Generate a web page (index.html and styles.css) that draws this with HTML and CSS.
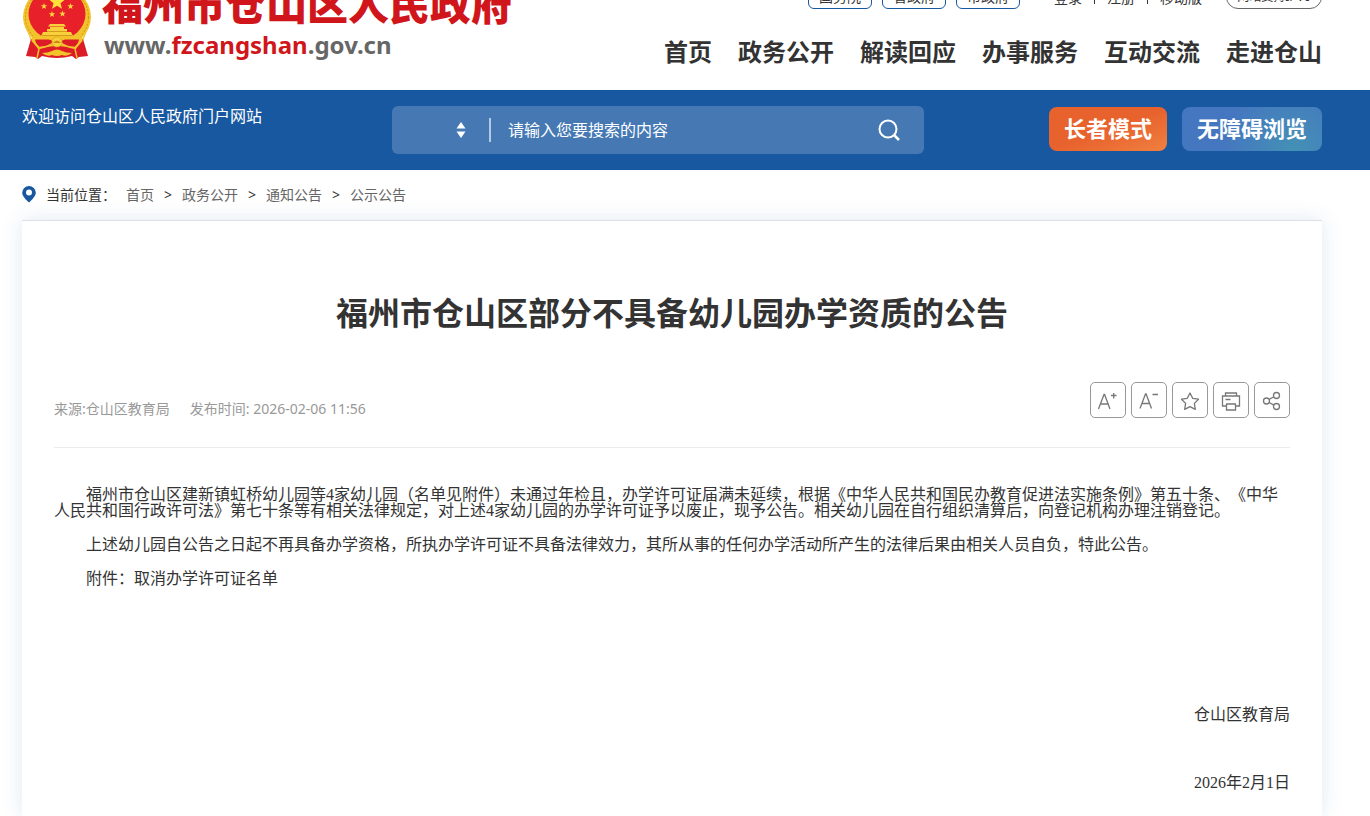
FILE: index.html
```html
<!DOCTYPE html>
<html lang="zh-CN">
<head>
    <meta charset="UTF-8">
    <title>福州市仓山区部分不具备幼儿园办学资质的公告</title>
    <link rel="stylesheet" href="styles.css">
</head>
<body>
    <header class="header">
        <div class="logo">
            <svg class="emblem" viewBox="0 0 70 74" aria-hidden="true">
                <ellipse cx="35" cy="31" rx="34" ry="31" fill="#f3c32c"/>
                <ellipse cx="35" cy="31" rx="31.500" ry="29" fill="none" stroke="#c9961c" stroke-dasharray="2 1.500"/>
                <path d="M2 36L10 54l4 6h42l4-6 8-18-8 22H10z" fill="#f3c32c"/>
                <ellipse cx="35" cy="28" rx="28.500" ry="26" fill="#e8202a"/>
                <path d="M35 8l2.200 5.300 5.700.3-4.400 3.700 1.500 5.500-5-3.100-5 3.100 1.500-5.500-4.400-3.700 5.700-.3z" fill="#ffe13a"/>
                <g fill="#ffd83a">
                    <path id="star" d="M22 17l.8 2.200h2.400l-1.900 1.500.7 2.300-2-1.300-2 1.300.7-2.300-1.900-1.500h2.400z"/>
                    <use href="#star" x="8" y="8"/>
                    <use href="#star" x="18.500" y="7.500"/>
                    <use href="#star" x="26.500" y="0"/>
                </g>
                <path d="M28 38h14l2 2.500H26zM28 41h14v2H28zM25 43h20v3H25zM21 46h28l2 4H19z" fill="#f8d03c"/>
                <path d="M12 50h46l3 3-5 12H14L9 53z" fill="#f3c32c"/>
                <path d="M25 45.500h20M20 49.500h30" stroke="#d39a1c" fill="none"/>
                <!-- ribbon and gear -->
                <path d="M13 53.500h14l4 1.500-3 5-13 1zM57 53.500H43L39 55l3 5 13 1z" fill="#dc1c26"/>
                <path d="M9 53l7 10q19-6 38 0l7-10 5 17-9 1-3 2-4-3q-15 4-30 0l-4 3-3-2-9-1z" fill="#dc1c26"/>
                <path d="M10 54l7 8q8-1 13-4l5 2 5-2q5 3 13 4l7-8" fill="none" stroke="#f3c32c" stroke-width="2"/>
                <circle cx="35" cy="56" r="5" fill="#f8d03c" stroke="#d39a1c" stroke-dasharray="1.500 1"/>
                <path d="M31 57q4-5 8 0z" fill="#c98a12"/>
                <path d="M20 67q6 0 10-2 5-3 10 0 4 2 10 2-5 4-10 2-5 2-10 0-5 2-10-2z" fill="#f3c32c"/>
                <path d="M17 63l-2 9M53 63l2 9" stroke="#f3c32c" stroke-width="1.500" fill="none"/>
            </svg>
            <div>
                <div class="site-name">福州市仓山区人民政府</div>
                <div class="site-url">www.<span>fzcangshan</span>.gov.cn</div>
            </div>
        </div>
        <div class="header-right">
            <div class="top-links">
                <a class="gov" href="#">国务院</a>
                <a class="gov" href="#">省政府</a>
                <a class="gov" href="#">市政府</a>
                <div class="user-links">
                    <a href="#">登录</a><i></i><a href="#">注册</a><i></i><a href="#">移动版</a>
                </div>
                <a class="ipv6" href="#">网站支持IPV6</a>
            </div>
            <nav class="nav">
                <a href="#">首页</a>
                <a href="#">政务公开</a>
                <a href="#">解读回应</a>
                <a href="#">办事服务</a>
                <a href="#">互动交流</a>
                <a href="#">走进仓山</a>
            </nav>
        </div>
    </header>

    <div class="banner">
        <p class="welcome">欢迎访问仓山区人民政府门户网站</p>
        <form class="search">
            <select class="search-type" aria-label="搜索类型">
                <option value=""></option>
            </select>
            <svg class="sort" viewBox="0 0 10 18" aria-hidden="true"><path d="M5 1l4.500 6.500h-9zM5 17l4.500-6.500h-9z" fill="#fff"/></svg>
            <input type="text" class="search-text" placeholder="请输入您要搜索的内容" aria-label="搜索内容">
            <button type="button" class="search-btn" aria-label="搜索">
                <svg viewBox="0 0 24 24" fill="none" stroke="#fff" stroke-width="2"><circle cx="11" cy="11" r="8.500"/><path d="M17 17l5 5" stroke-width="2.500"/></svg>
            </button>
        </form>
        <div class="modes">
            <button type="button" class="mode elder">长者模式</button>
            <button type="button" class="mode barrier">无障碍浏览</button>
        </div>
    </div>

    <nav class="crumbs">
        <svg class="pin" viewBox="0 0 14 18" aria-hidden="true"><path fill-rule="evenodd" d="M7 1a6.800 6.800 0 0 1 6.800 6.800C13.800 11 10 15 7 17.500 4 15 .2 11 .2 7.800A6.800 6.800 0 0 1 7 1zm0 3.500a3 3 0 1 0 0 6 3 3 0 0 0 0-6z" fill="#1758a0"/></svg>
        <span class="here">当前位置：</span>
        <a href="#">首页</a><span>&gt;</span>
        <a href="#">政务公开</a><span>&gt;</span>
        <a href="#">通知公告</a><span>&gt;</span>
        <a href="#">公示公告</a>
    </nav>

    <main class="card">
        <h1>福州市仓山区部分不具备幼儿园办学资质的公告</h1>
        <div class="info">
            <div class="meta">
                <span>来源:仓山区教育局</span>
                <span>发布时间: 2026-02-06 11:56</span>
            </div>
            <div class="tools">
                <button type="button" aria-label="放大字体"><svg viewBox="0 0 34 34"><path d="M7.500 26L13 11.500h.6L19 26M9.500 21h7.500M20 12.500h5.500M22.700 10v5.500"/></svg></button>
                <button type="button" aria-label="缩小字体"><svg viewBox="0 0 34 34"><path d="M8 25.500L13.500 11h.6l5.400 14.500M10 20.500h7.500M20.500 11.500h5.500"/></svg></button>
                <button type="button" aria-label="收藏"><svg viewBox="0 0 34 34"><path d="M17 10l2.700 5.300 5.800.9-4.100 4.200.9 6-5.300-2.700-5.300 2.700.9-6-4.100-4.200 5.800-.9z" stroke-linejoin="round"/></svg></button>
                <button type="button" aria-label="打印"><svg viewBox="0 0 34 34"><path d="M11.500 13v-3h11v3M12 23H8.500V13h17v10H22M11.500 16.500h5M12 21h10M12.500 21v6h9v-6"/></svg></button>
                <button type="button" aria-label="分享"><svg viewBox="0 0 34 34"><circle cx="11.500" cy="18" r="3"/><circle cx="21.500" cy="12.500" r="3"/><circle cx="21.500" cy="23.500" r="3"/><path d="M14 16.500l4.900-2.700M14.200 19.500l4.700 2.600"/></svg></button>
            </div>
        </div>
        <article class="article">
            <p>福州市仓山区建新镇虹桥幼儿园等4家幼儿园（名单见附件）未通过年检且，办学许可证届满未延续，根据《中华人民共和国民办教育促进法实施条例》第五十条、《中华人民共和国行政许可法》第七十条等有相关法律规定，对上述4家幼儿园的办学许可证予以废止，现予公告。相关幼儿园在自行组织清算后，向登记机构办理注销登记。</p>
            <p>上述幼儿园自公告之日起不再具备办学资格，所执办学许可证不具备法律效力，其所从事的任何办学活动所产生的法律后果由相关人员自负，特此公告。</p>
            <p>附件：取消办学许可证名单</p>
            <div class="sign">
                <p>仓山区教育局</p>
                <p>2026年2月1日</p>
            </div>
        </article>
    </main>
</body>
</html>
```
FILE: styles.css
```css
* {
    box-sizing: border-box;
}
body {
    margin: 0;
    min-height: 100vh;
    display: flex;
    flex-direction: column;
    font-family: "Noto Sans", "Noto Sans CJK SC", sans-serif;
    font-size: 14px;
    color: #333;
    background-color: #fff;
}
a {
    color: inherit;
    text-decoration: none;
}
p {
    margin: 0;
}
button {
    padding: 0;
    font-family: inherit;
    cursor: pointer;
}

/* header */
.header {
    height: 90px;
    padding: 0 48px 22px 22px;
    display: flex;
    justify-content: space-between;
    align-items: flex-end;
    overflow: hidden;
}
.logo {
    display: flex;
    align-items: flex-end;
    gap: 10px;
    padding-bottom: 8px;
}
.emblem {
    width: 70px;
    height: 74px;
}
.site-name {
    font-size: 41px;
    line-height: 52px;
    font-weight: 900;
    color: #d0161b;
    white-space: nowrap;
}
.site-url {
    padding-left: 2px;
    font-size: 24px;
    line-height: 30px;
    font-weight: bold;
    color: #666;
}
.site-url span {
    color: #d0161b;
}
.top-links {
    display: flex;
    justify-content: flex-end;
    align-items: center;
    gap: 10px;
    margin-bottom: 27px;
}
.gov {
    width: 64px;
    border: 1px solid #1758a0;
    border-radius: 6px;
    line-height: 22px;
    text-align: center;
}
.user-links {
    display: flex;
    align-items: center;
    gap: 12px;
    margin: 0 14px 0 24px;
}
.user-links i {
    width: 1px;
    height: 14px;
    background-color: #333;
}
.ipv6 {
    width: 96px;
    border: 1px solid #666;
    border-radius: 12px;
    font-size: 12px;
    line-height: 22px;
    text-align: center;
}
.nav {
    display: flex;
    justify-content: flex-end;
    gap: 26px;
    font-size: 24px;
    line-height: 32px;
    font-weight: bold;
}

/* blue bar */
.banner {
    height: 80px;
    padding: 16px 48px 16px 22px;
    display: flex;
    align-items: center;
    background-color: #1758a0;
    color: #fff;
}
.welcome {
    width: 370px;
    align-self: flex-start;
    font-size: 16px;
    line-height: 20px;
}
.search {
    position: relative;
    width: 532px;
    height: 48px;
    display: flex;
    align-items: center;
    border-radius: 6px;
    background-color: #4679b3;
}
.search-type {
    width: 99px;
    height: 24px;
    appearance: none;
    border: none;
    border-right: 2px solid #b5c9e1;
    background: none;
    color: #fff;
}
.sort {
    position: absolute;
    left: 64px;
    top: 15px;
    width: 10px;
    height: 18px;
}
.search-text {
    flex: 1;
    min-width: 0;
    height: 48px;
    padding: 0 17px;
    border: none;
    background: none;
    font-family: inherit;
    font-size: 16px;
    color: #fff;
}
.search-text::placeholder {
    color: #fff;
}
.search-btn {
    width: 70px;
    height: 48px;
    border: none;
    background: none;
}
.search-btn svg {
    display: block;
    width: 24px;
    height: 24px;
    margin: 0 auto;
}
.modes {
    margin-left: auto;
    display: flex;
    gap: 15px;
    padding-bottom: 2px;
}
.mode {
    height: 44px;
    padding: 0 15px 4px;
    border: none;
    border-radius: 8px;
    font-size: 22px;
    font-weight: bold;
    color: #fff;
    white-space: nowrap;
}
.elder {
    background: linear-gradient(160deg, #e8622d 50%, #f08040);
}
.barrier {
    background: radial-gradient(circle at 80% 100%, #4391b5, #4576c0 60%);
}

/* breadcrumb */
.crumbs {
    height: 50px;
    padding: 0 0 2px 22px;
    display: flex;
    align-items: center;
    gap: 10px;
    color: #666;
}
.crumbs span {
    color: #333;
}
.pin {
    width: 14px;
    height: 18px;
}

/* article card */
.card {
    flex: 1;
    margin: 0 48px 0 22px;
    padding: 69px 32px 25px;
    border-top: 1px solid #dcdfe4;
    background-color: #fff;
    box-shadow: 0 0 20px rgba(23, 88, 160, 0.13);
}
h1 {
    margin: 0;
    font-size: 32px;
    line-height: 46px;
    text-align: center;
}
.info {
    display: flex;
    justify-content: space-between;
    align-items: center;
    margin-top: 46px;
    padding-bottom: 29px;
    border-bottom: 1px solid #ebebeb;
}
.meta {
    display: flex;
    gap: 20px;
    padding-top: 16px;
    color: #999;
}
.tools {
    display: flex;
    gap: 5px;
}
.tools button {
    width: 36px;
    height: 36px;
    border: 1px solid #999;
    border-radius: 5px;
    background-color: #fff;
}
.tools svg {
    display: block;
    width: 34px;
    height: 34px;
    fill: none;
    stroke: #777;
    stroke-width: 1.3;
}
.article {
    padding-top: 39px;
    font-family: "Liberation Serif", "Noto Sans CJK SC", serif;
    font-size: 16px;
    line-height: 16px;
    text-spacing-trim: space-all;
}
.article p {
    margin-bottom: 18px;
    padding-right: 8px;
    text-indent: 2em;
}
.sign {
    padding-top: 102px;
    text-align: right;
}
.article .sign p {
    margin-bottom: 52px;
    padding-right: 0;
}
.article .sign p:last-child {
    margin-bottom: 0;
}
```
